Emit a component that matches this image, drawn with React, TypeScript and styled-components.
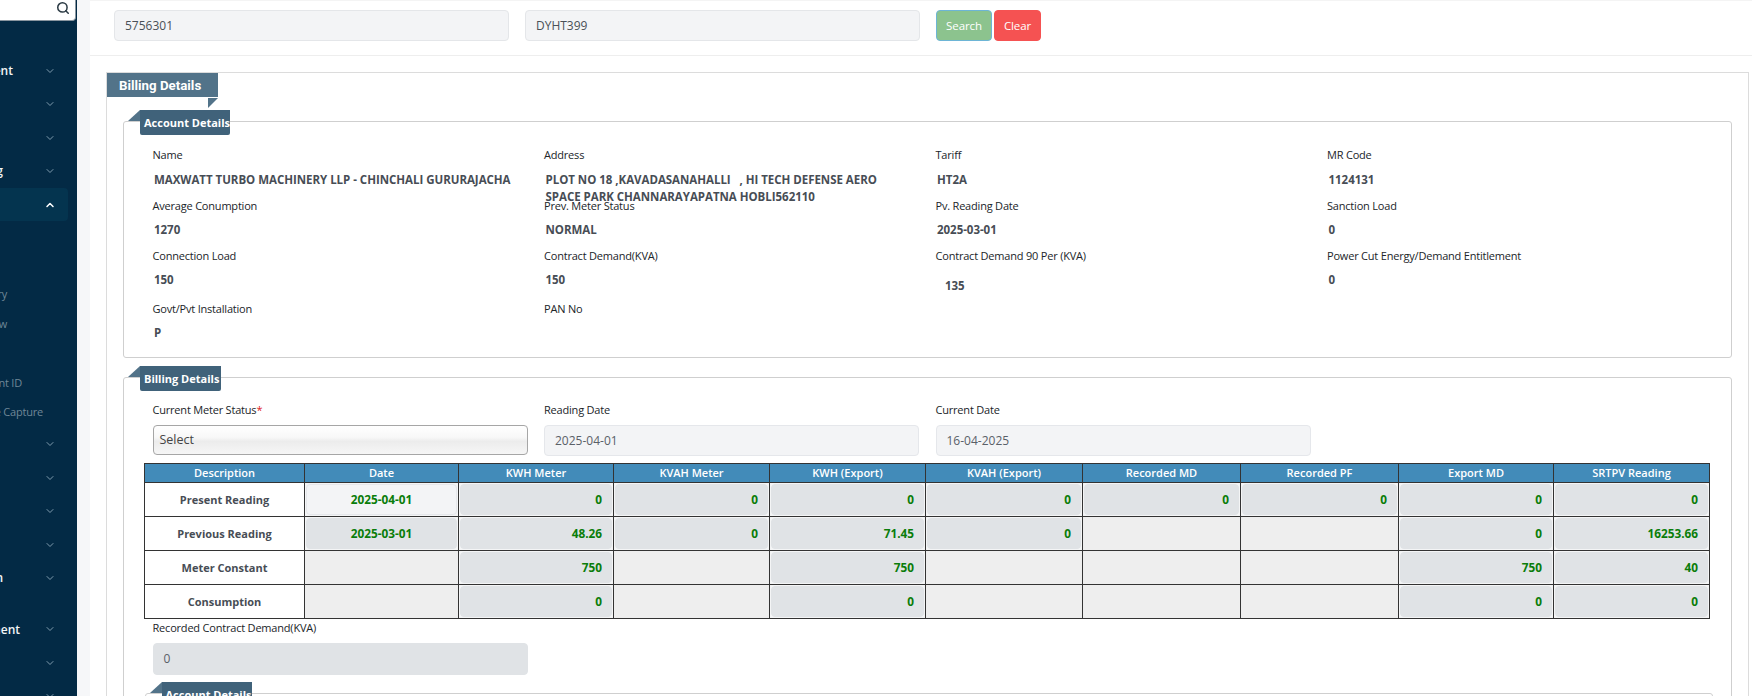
import { ChevronDown, ChevronUp, Search } from "lucide-react";
import styled, { createGlobalStyle } from "styled-components";

const GlobalStyle = createGlobalStyle`
  html, body { margin: 0; padding: 0; height: 696px; overflow: hidden; background: #f6f7f9; }
  body { font-family: "Open Sans", "Noto Sans", sans-serif; font-size: 11px; letter-spacing: -0.2px; color: #212529; }
  * { box-sizing: border-box; }
`;

const Page = styled.div`
  display: flex;
  width: 1752px;
  height: 696px;
  overflow: hidden;
`;

const Sidebar = styled.aside`
  width: 77px;
  flex: none;
  background: #032a45;
  overflow: hidden;
`;

const SideSearch = styled.div`
  height: 21px;
  margin-right: 1px;
  margin-bottom: 33px;
  padding-right: 5px;
  display: flex;
  align-items: flex-start;
  justify-content: flex-end;
  padding-top: 1px;
  background: #fff;
  border-right: 1px solid #8a96a0;
  border-bottom: 1px solid #8a96a0;
  border-bottom-right-radius: 4px;
  color: #2b3a44;
`;

const NavRow = styled.div<{ $active?: boolean; $gap?: number }>`
  position: relative;
  height: 33.4px;
  width: 68px;
  margin-top: ${(p) => p.$gap ?? 0}px;
  display: flex;
  align-items: center;
  color: ${(p) => (p.$active ? "#fff" : "#7f9bad")};
  background: ${(p) => (p.$active ? "#04344f" : "transparent")};
  border-radius: 0 4px 4px 0;
  svg { position: absolute; left: 44px; top: 11px; }
`;

const SubRow = styled.div`
  height: 29.5px;
  padding-bottom: 2px;
  display: flex;
  align-items: center;
`;

const ClippedLabel = styled.span<{ $end: number; $sub?: boolean }>`
  width: ${(p) => p.$end}px;
  display: flex;
  justify-content: flex-end;
  white-space: pre;
  letter-spacing: ${(p) => (p.$sub ? "-0.2px" : "0")};
  font-size: ${(p) => (p.$sub ? "11px" : "12px")};
  font-weight: ${(p) => (p.$sub ? 400 : 600)};
  color: ${(p) => (p.$sub ? "#6f8797" : "#f2f5f7")};
`;

const Main = styled.main`
  margin-left: 13px;
  width: 1662px;
  background: #fff;
`;

const SearchBar = styled.div`
  height: 56px;
  padding: 9px 0 0 24px;
  display: flex;
  border-top: 1px solid #f4f4f4;
  border-bottom: 1px solid #eeeeee;
  letter-spacing: 0;
`;

const TopInput = styled.div`
  width: 395px;
  height: 31px;
  margin-right: 16px;
  padding-left: 10px;
  display: flex;
  align-items: center;
  background: #f3f4f6;
  border: 1px solid #e4e6e9;
  border-radius: 4px;
  font-size: 12px;
  color: #495057;
`;

const Button = styled.div<{ $bg: string; $edge: string; $w: number }>`
  width: ${(p) => p.$w}px;
  height: 31px;
  margin-right: 2px;
  display: flex;
  align-items: center;
  justify-content: center;
  background: ${(p) => p.$bg};
  border: 1px solid ${(p) => p.$edge};
  border-radius: 4px;
  color: #fff;
  font-size: 11.5px;
  letter-spacing: -0.1px;
`;

const Outer = styled.section`
  position: relative;
  margin: 16px 3px 0 16px;
  padding: 48px 16px 0;
  height: 700px;
  border: 1px solid #dcdcdc;
`;

const MainFlag = styled.h2`
  position: absolute;
  left: 0;
  top: 0;
  width: 111px;
  height: 24px;
  margin: 0;
  padding-left: 12px;
  display: flex;
  align-items: center;
  background: #527389;
  color: #fff;
  font-family: Roboto, sans-serif;
  font-size: 13.3px;
  font-weight: 700;
  letter-spacing: 0;
  &::after {
    content: "";
    position: absolute;
    right: 0;
    top: 25px;
    border-top: 10px solid #527389;
    border-right: 10px solid transparent;
  }
`;

const Group = styled.fieldset<{ $h?: number }>`
  position: relative;
  margin: 0 0 18.5px;
  padding: 0;
  min-width: 0;
  height: ${(p) => (p.$h ? `${p.$h}px` : "auto")};
  border: 1px solid #cfcfcf;
  border-radius: 3px;
`;

const GroupFlag = styled.div<{ $w: number }>`
  position: absolute;
  left: 16px;
  top: -12px;
  width: ${(p) => p.$w}px;
  height: 25px;
  padding-left: 4px;
  display: flex;
  align-items: center;
  background: #40627a;
  border-radius: 0 0 2px 2px;
  color: #fff;
  font-size: 11px;
  font-weight: 700;
  letter-spacing: 0;
  white-space: nowrap;
  &::before {
    content: "";
    position: absolute;
    left: -12px;
    top: 0;
    border-bottom: 11px solid #527389;
    border-left: 12px solid transparent;
  }
`;

const InfoGrid = styled.div`
  display: grid;
  grid-template-columns: repeat(4, 391.5px);
  grid-template-rows: 51px 50px 53px 50px;
  padding: 25px 0 0 28.5px;
`;

const InfoCell = styled.div`
  min-width: 0;
`;

const InfoLabel = styled.div`
  height: 16px;
  line-height: 16px;
  white-space: nowrap;
`;

const InfoValue = styled.div<{ $shift?: number; $drop?: number }>`
  margin: ${(p) => 7 + (p.$drop ?? 0)}px 0 0 ${(p) => 1.5 + (p.$shift ?? 0)}px;
  width: 370px;
  line-height: 17px;
  font-size: 11.5px;
  font-weight: 700;
  letter-spacing: -0.03px;
  color: #474d55;
  white-space: pre-wrap;
`;

const FormGrid = styled.div`
  display: grid;
  grid-template-columns: repeat(3, 375px);
  column-gap: 16.5px;
  padding: 24px 0 0 28.5px;
`;

const FieldLabel = styled.div`
  height: 16px;
  line-height: 16px;
  margin-bottom: 7px;
  white-space: nowrap;
  b { color: #e02020; font-weight: 400; }
`;

const SelectBox = styled.div`
  height: 30px;
  padding-left: 6px;
  display: flex;
  align-items: center;
  border: 1px solid #a6a6a6;
  border-radius: 4px;
  background: linear-gradient(#ffffff 0%, #f8f8f8 40%, #ececec 55%, #f6f6f6 100%);
  font-size: 12.5px;
  letter-spacing: 0;
  color: #444;
`;

const ReadInput = styled.div<{ $dark?: boolean; $h?: number }>`
  width: 375px;
  height: ${(p) => p.$h ?? 31}px;
  padding-left: 10px;
  display: flex;
  align-items: center;
  background: ${(p) => (p.$dark ? "#e0e3e6" : "#f3f4f6")};
  border: 1px solid ${(p) => (p.$dark ? "#e0e3e6" : "#e5e7eb")};
  border-radius: 4px;
  font-size: 12px;
  letter-spacing: 0;
  color: #5a6068;
`;

const Table = styled.table`
  margin: 7px 0 0 20px;
  width: 1565px;
  table-layout: fixed;
  border-collapse: collapse;
  border: 1px solid #333;
`;

const HeadCell = styled.th`
  height: 19px;
  padding: 0;
  background: #428bb9;
  border: 1px solid #333;
  color: #fff;
  font-size: 11px;
  font-weight: 600;
  letter-spacing: 0;
  text-align: center;
  white-space: nowrap;
`;

const RowName = styled.td`
  height: 34px;
  padding: 0;
  background: #fff;
  border: 1px solid #333;
  text-align: center;
  font-size: 11px;
  font-weight: 700;
  letter-spacing: 0;
  color: #474d55;
`;

const BlankCell = styled.td`
  height: 34px;
  padding: 0;
  background: #eeeeee;
  border: 1px solid #333;
`;

const ValueCell = styled.td`
  height: 34px;
  padding: 1px;
  background: #f4f5f6;
  border: 1px solid #333;
`;

const CellInput = styled.div<{ $date?: boolean; $light?: boolean }>`
  height: 31px;
  padding-right: ${(p) => (p.$date ? 0 : 9)}px;
  display: flex;
  align-items: center;
  justify-content: ${(p) => (p.$date ? "center" : "flex-end")};
  background: ${(p) => (p.$light ? "#f3f4f6" : "#e0e3e6")};
  border: 1px solid ${(p) => (p.$light ? "#e5e7eb" : "#e0e3e6")};
  border-radius: 4px;
  font-size: 11.8px;
  font-weight: 700;
  letter-spacing: 0;
  color: #0a7d0a;
`;

const DemandBlock = styled.div`
  margin: 1px 0 0 28.5px;
`;

const LastGroup = styled(Group)`
  margin: 18px 18px 0 20.5px;
  height: 40px;
`;

type NavItem = { text?: string; end?: number; gap?: number; active?: boolean };

const topNav: NavItem[] = [{ text: "ent", end: 13 }, {}, {}, { text: "g", end: 3 }, { active: true }];
const subNav: [string, number][] = [["", 0], ["", 0], ["ry", 7], ["w", 7], ["", 0], ["nt ID", 22], ["e Capture", 43]];
const bottomNav: NavItem[] = [
  {},
  {},
  {},
  {},
  { text: "n", end: 3 },
  { text: "ment", end: 20, gap: 18 },
  {},
  {},
];

const info: { label: string; value?: string; shift?: number; drop?: number }[] = [
  { label: "Name", value: "MAXWATT TURBO MACHINERY LLP - CHINCHALI GURURAJACHA", drop: 1 },
  { label: "Address", value: "PLOT NO 18 ,KAVADASANAHALLI   , HI TECH DEFENSE AERO\nSPACE PARK CHANNARAYAPATNA HOBLI562110", drop: 1 },
  { label: "Tariff", value: "HT2A", drop: 1 },
  { label: "MR Code", value: "1124131", drop: 1 },
  { label: "Average Conumption", value: "1270" },
  { label: "Prev. Meter Status", value: "NORMAL" },
  { label: "Pv. Reading Date", value: "2025-03-01" },
  { label: "Sanction Load", value: "0" },
  { label: "Connection Load", value: "150" },
  { label: "Contract Demand(KVA)", value: "150" },
  { label: "Contract Demand 90 Per (KVA)", value: "135", shift: 8, drop: 6 },
  { label: "Power Cut Energy/Demand Entitlement", value: "0" },
  { label: "Govt/Pvt Installation", value: "P" },
  { label: "PAN No" },
];

const columns = [
  ["Description", 160],
  ["Date", 154],
  ["KWH Meter", 155],
  ["KVAH Meter", 156],
  ["KWH (Export)", 156],
  ["KVAH (Export)", 157],
  ["Recorded MD", 158],
  ["Recorded PF", 158],
  ["Export MD", 155],
  ["SRTPV Reading", 156],
] as const;

const rows: { name: string; cells: (string | null)[] }[] = [
  { name: "Present Reading", cells: ["2025-04-01", "0", "0", "0", "0", "0", "0", "0", "0"] },
  { name: "Previous Reading", cells: ["2025-03-01", "48.26", "0", "71.45", "0", null, null, "0", "16253.66"] },
  { name: "Meter Constant", cells: [null, "750", null, "750", null, null, null, "750", "40"] },
  { name: "Consumption", cells: [null, "0", null, "0", null, null, null, "0", "0"] },
];

function NavLine({ item }: { item: NavItem }) {
  return (
    <NavRow $active={item.active} $gap={item.gap}>
      {item.text && <ClippedLabel $end={item.end ?? 0}>{item.text}</ClippedLabel>}
      {item.active ? <ChevronUp size={12} strokeWidth={3} /> : <ChevronDown size={12} strokeWidth={2} />}
    </NavRow>
  );
}

export default function App() {
  return (
    <Page>
      <GlobalStyle />
      <Sidebar>
        <SideSearch>
          <Search size={14} strokeWidth={2.6} />
        </SideSearch>
        {topNav.map((item, i) => (
          <NavLine key={i} item={item} />
        ))}
        {subNav.map(([text, end], i) => (
          <SubRow key={i}>
            {text && (
              <ClippedLabel $sub $end={end}>
                {text}
              </ClippedLabel>
            )}
          </SubRow>
        ))}
        {bottomNav.map((item, i) => (
          <NavLine key={i} item={item} />
        ))}
      </Sidebar>

      <Main>
        <SearchBar>
          <TopInput>5756301</TopInput>
          <TopInput>DYHT399</TopInput>
          <Button $bg="#8cc38e" $edge="#6db5d6" $w={56}>
            Search
          </Button>
          <Button $bg="#f55252" $edge="#f55252" $w={47}>
            Clear
          </Button>
        </SearchBar>

        <Outer>
          <MainFlag>Billing Details</MainFlag>

          <Group $h={237}>
            <GroupFlag $w={90}>Account Details</GroupFlag>
            <InfoGrid>
              {info.map((f) => (
                <InfoCell key={f.label}>
                  <InfoLabel>{f.label}</InfoLabel>
                  {f.value && (
                    <InfoValue $shift={f.shift} $drop={f.drop}>
                      {f.value}
                    </InfoValue>
                  )}
                </InfoCell>
              ))}
            </InfoGrid>
          </Group>

          <Group>
            <GroupFlag $w={81}>Billing Details</GroupFlag>
            <FormGrid>
              <div>
                <FieldLabel>
                  Current Meter Status<b>*</b>
                </FieldLabel>
                <SelectBox>Select</SelectBox>
              </div>
              <div>
                <FieldLabel>Reading Date</FieldLabel>
                <ReadInput>2025-04-01</ReadInput>
              </div>
              <div>
                <FieldLabel>Current Date</FieldLabel>
                <ReadInput>16-04-2025</ReadInput>
              </div>
            </FormGrid>

            <Table>
              <colgroup>
                {columns.map(([name, width]) => (
                  <col key={name} width={width} />
                ))}
              </colgroup>
              <thead>
                <tr>
                  {columns.map(([name]) => (
                    <HeadCell key={name}>{name}</HeadCell>
                  ))}
                </tr>
              </thead>
              <tbody>
                {rows.map((row, r) => (
                  <tr key={row.name}>
                    <RowName>{row.name}</RowName>
                    {row.cells.map((cell, c) =>
                      cell === null ? (
                        <BlankCell key={c} />
                      ) : (
                        <ValueCell key={c}>
                          <CellInput $date={c === 0} $light={c === 0 && r === 0}>
                            {cell}
                          </CellInput>
                        </ValueCell>
                      ),
                    )}
                  </tr>
                ))}
              </tbody>
            </Table>

            <DemandBlock>
              <FieldLabel>Recorded Contract Demand(KVA)</FieldLabel>
              <ReadInput $dark $h={32}>
                0
              </ReadInput>
            </DemandBlock>

            <LastGroup>
              <GroupFlag $w={90}>Account Details</GroupFlag>
            </LastGroup>
          </Group>
        </Outer>
      </Main>
    </Page>
  );
}
